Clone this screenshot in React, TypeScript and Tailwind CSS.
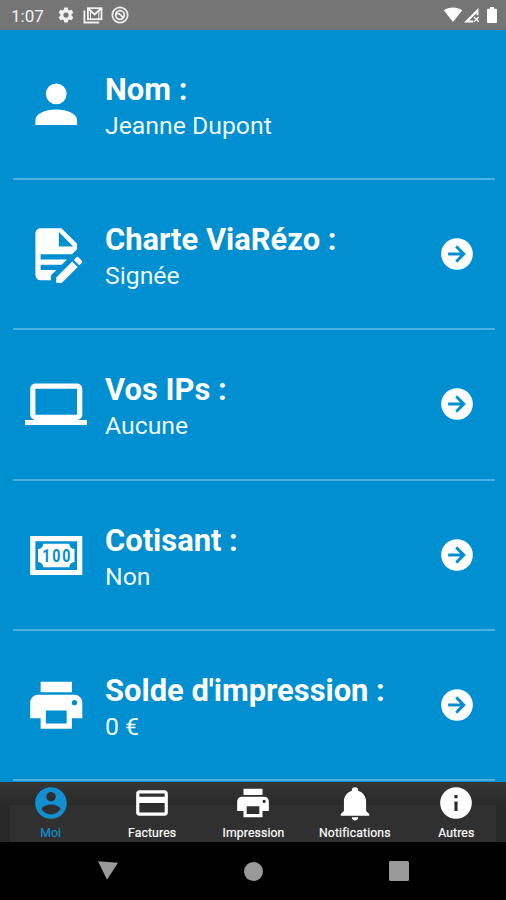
import type { ReactNode } from "react";

const paths = {
  person: "M12 4a4 4 0 1 1 0 8 4 4 0 0 1 0-8m0 10c4.42 0 8 1.79 8 4v2H4v-2c0-2.21 3.58-4 8-4z",
  fileEdit:
    "M6,2C4.89,2 4,2.9 4,4V20A2,2 0 0,0 6,22H10V20.09L12.09,18H6V16H14.09L16.09,14H6V12H18.09L20,10.09V8L14,2H6M13,3.5L18.5,9H13V3.5M20.15,13C20,13 19.86,13.05 19.75,13.16L18.73,14.18L20.82,16.26L21.84,15.25C22.05,15.03 22.05,14.67 21.84,14.46L20.54,13.16C20.43,13.05 20.29,13 20.15,13M18.14,14.77L12,20.92V23H14.08L20.23,16.85L18.14,14.77Z",
  laptop:
    "M4,6H20V16H4M20,18A2,2 0 0,0 22,16V6C22,4.89 21.1,4 20,4H4C2.89,4 2,4.89 2,6V16A2,2 0 0,0 4,18H0V20H24V18H20Z",
  note: "M2,5H22V20H2V5M20,18V7H4V18H20M17,8A2,2 0 0,0 19,10V15A2,2 0 0,0 17,17H7A2,2 0 0,0 5,15V10A2,2 0 0,0 7,8H17Z",
  printer:
    "M18,3H6V7H18M19,12A1,1 0 0,1 18,11A1,1 0 0,1 19,10A1,1 0 0,1 20,11A1,1 0 0,1 19,12M16,19H8V14H16M19,8H5A3,3 0 0,0 2,11V17H6V21H18V17H22V11A3,3 0 0,0 19,8Z",
  arrow:
    "M22,12A10,10 0 0,1 12,22A10,10 0 0,1 2,12A10,10 0 0,1 12,2A10,10 0 0,1 22,12M6.4,13H14L10.9,16.1L12.1,17.5L17.6,12L12.1,6.5L10.9,7.9L14,11H6.4V13Z",
  account:
    "M12,19.2C9.5,19.2 7.29,17.92 6,16C6.03,14 10,12.9 12,12.9C14,12.9 17.97,14 18,16C16.71,17.92 14.5,19.2 12,19.2M12,5A3,3 0 0,1 15,8A3,3 0 0,1 12,11A3,3 0 0,1 9,8A3,3 0 0,1 12,5M12,2A10,10 0 0,0 2,12A10,10 0 0,0 12,22A10,10 0 0,0 22,12C22,6.47 17.5,2 12,2Z",
  card: "M20,8H4V6H20M20,18H4V12H20M20,4H4C2.89,4 2,4.89 2,6V18A2,2 0 0,0 4,20H20A2,2 0 0,0 22,18V6C22,4.89 21.1,4 20,4Z",
  bell: "M21,19V20H3V19L5,17V11C5,7.9 7.03,5.17 10,4.29C10,4.19 10,4.1 10,4A2,2 0 0,1 12,2A2,2 0 0,1 14,4C14,4.1 14,4.19 14,4.29C16.97,5.17 19,7.9 19,11V17L21,19M14,21A2,2 0 0,1 12,23A2,2 0 0,1 10,21",
  info: "M13,9H11V7H13M13,17H11V11H13M12,2A10,10 0 0,0 2,12A10,10 0 0,0 12,22A10,10 0 0,0 22,12A10,10 0 0,0 12,2Z",
  gear: "M12,15.5A3.5,3.5 0 0,1 8.5,12A3.5,3.5 0 0,1 12,8.5A3.5,3.5 0 0,1 15.5,12A3.5,3.5 0 0,1 12,15.5M19.43,12.97C19.47,12.65 19.5,12.33 19.5,12C19.5,11.67 19.47,11.34 19.43,11L21.54,9.37C21.73,9.22 21.78,8.95 21.66,8.73L19.66,5.27C19.54,5.05 19.27,4.96 19.05,5.05L16.56,6.05C16.04,5.66 15.5,5.32 14.87,5.07L14.5,2.42C14.46,2.18 14.25,2 14,2H10C9.75,2 9.54,2.18 9.5,2.42L9.13,5.07C8.5,5.32 7.96,5.66 7.44,6.05L4.95,5.05C4.73,4.96 4.46,5.05 4.34,5.27L2.34,8.73C2.21,8.95 2.27,9.22 2.46,9.37L4.57,11C4.53,11.34 4.5,11.67 4.5,12C4.5,12.33 4.53,12.65 4.57,12.97L2.46,14.63C2.27,14.78 2.21,15.05 2.34,15.27L4.34,18.73C4.46,18.95 4.73,19.03 4.95,18.95L7.44,17.94C7.96,18.34 8.5,18.68 9.13,18.93L9.5,21.58C9.54,21.82 9.75,22 10,22H14C14.25,22 14.46,21.82 14.5,21.58L14.87,18.93C15.5,18.67 16.04,18.34 16.56,17.94L19.05,18.95C19.27,19.03 19.54,18.95 19.66,18.73L21.66,15.27C21.78,15.05 21.73,14.78 21.54,14.63L19.43,12.97Z",
};

function Icon({ d, className, children }: { d: string; className: string; children?: ReactNode }) {
  return (
    <svg viewBox="0 0 24 24" fill="currentColor" fillRule="evenodd" className={className}>
      <path d={d} />
      {children}
    </svg>
  );
}

function StatusBar() {
  return (
    <header className="flex h-[30px] shrink-0 items-center justify-between bg-[#757575] pl-[11px] pr-[8px] text-white/90">
      <div className="flex items-center">
        <span className="w-[46px] pt-px text-[17px] leading-[30px]">1:07</span>
        <Icon d={paths.gear} className="size-[18px]" />
        <svg viewBox="0 0 20 18" className="ml-[8px] h-[18px] w-[20px]" fill="none" stroke="currentColor">
          <path d="M1.4 4.5v12h14.8" strokeWidth="1.8" />
          <rect x="4.9" y="2.2" width="13.6" height="11" strokeWidth="1.8" />
          <path d="M5 2.5l6.6 6 6.6-6" strokeWidth="2" />
          <path d="M7.5 5v8.500M15.800 5v8.500" strokeWidth="1" />
        </svg>
        <svg viewBox="0 0 18 18" className="ml-[8px] size-[18px]" fill="none" stroke="currentColor">
          <circle cx="9" cy="9" r="7.7" strokeWidth="1.7" />
          <circle cx="9" cy="9" r="4.3" strokeWidth="1.8" />
          <path d="M4.8 7.800c2.500-1 4 .2 4.600 1.200l3 2.800" strokeWidth="1.8" />
        </svg>
      </div>
      <div className="flex items-center text-white">
        <svg viewBox="0 0 20 18" className="h-[18px] w-[20px]" fill="currentColor">
          <path d="M.8 4.300C6 .6 14 .6 19.200 4.300L10 16z" />
        </svg>
        <svg viewBox="0 0 17 18" className="h-[18px] w-[17px]" fill="currentColor">
          <path fillRule="evenodd" d="M1 16.500L15.500 2v7.200h-2V7L6.200 14.500h4v2z" />
          <path d="M11 11l4.800 4.800M15.800 11L11 15.800" stroke="currentColor" strokeWidth="1.3" />
        </svg>
        <svg viewBox="0 0 12 18" className="ml-[6px] h-[18px] w-[12px]" fill="currentColor">
          <path d="M4 1h4v1.700h2.200q.8 0 .8.800v12.700q0 .8-.8.800H1.800q-.8 0-.8-.8V3.500q0-.8.800-.8H4z" />
        </svg>
      </div>
    </header>
  );
}

// Narrow digits printed on the banknote icon.
function NoteValue() {
  return (
    <text
      transform="translate(12 14.8) scale(0.8 1)"
      textAnchor="middle"
      fontSize="6.8"
      fontWeight="700"
      letterSpacing="0.9"
      dx="0.45"
      fill="#008fd0"
    >
      100
    </text>
  );
}

const rows = [
  { title: "Nom :", value: "Jeanne Dupont", d: paths.person, link: false },
  { title: "Charte ViaRézo :", value: "Signée", d: paths.fileEdit, link: true },
  { title: "Vos IPs :", value: "Aucune", d: paths.laptop, link: true },
  { title: "Cotisant :", value: "Non", d: paths.note, link: true },
  { title: "Solde d'impression :", value: "0 €", d: paths.printer, link: true },
];

const tabs = [
  { label: "Moi", d: paths.account },
  { label: "Factures", d: paths.card },
  { label: "Impression", d: paths.printer },
  { label: "Notifications", d: paths.bell },
  { label: "Autres", d: paths.info },
];

export default function App() {
  return (
    <div className="flex h-[900px] w-[506px] flex-col overflow-hidden bg-[#008fd0] font-[Roboto,sans-serif] text-white">
      <StatusBar />
      <main className="h-[752px] shrink-0 pl-[13px] pr-[11.5px]">
        {rows.map((r) => (
          <section
            key={r.title}
            className="flex h-[150.2px] items-center border-b-2 border-[#4db1e0] pl-[11.5px] pr-[18.5px]"
          >
            <Icon d={r.d} className="size-[62.5px] shrink-0">
              {r.d === paths.note && <NoteValue />}
            </Icon>
            <div className="ml-[18px] grow pt-[7px]">
              <h2 className="text-[30.9px] font-bold leading-[37px]">{r.title}</h2>
              <p className="text-[24.8px] leading-[36px] text-white/95">{r.value}</p>
            </div>
            {r.link && <Icon d={paths.arrow} className="size-[38px] shrink-0" />}
          </section>
        ))}
      </main>
      <nav className="flex h-[60px] shrink-0 bg-[linear-gradient(#303030,#303030),linear-gradient(#363636,#292929_38%)] bg-[size:486px_37px,100%_100%] bg-[position:10px_23px,0_0] bg-no-repeat">
        {tabs.map((t, i) => (
          <div
            key={t.label}
            className={`flex w-[101.4px] shrink-0 flex-col items-center pt-[2px] ${i === 0 ? "text-[#118fd0]" : "text-white"}`}
          >
            <Icon d={t.d} className="size-[38px] shrink-0" />
            <span className="mt-[3px] text-[12.2px] leading-[17px] tracking-[0.15px] [-webkit-text-stroke:0.2px_currentColor]">
              {t.label}
            </span>
          </div>
        ))}
      </nav>
      <footer className="flex h-[58px] shrink-0 items-center justify-between bg-black pl-[97px] pr-[97px] text-[#999]">
        <svg viewBox="0 0 22 20" className="h-[20px] w-[22px]" fill="currentColor">
          <path d="M1 .3l20 1.500L10 18.800z" />
        </svg>
        <div className="mr-px size-[19px] rounded-full bg-[#999]" />
        <div className="size-[20px] rounded-[1.5px] bg-[#999]" />
      </footer>
    </div>
  );
}
